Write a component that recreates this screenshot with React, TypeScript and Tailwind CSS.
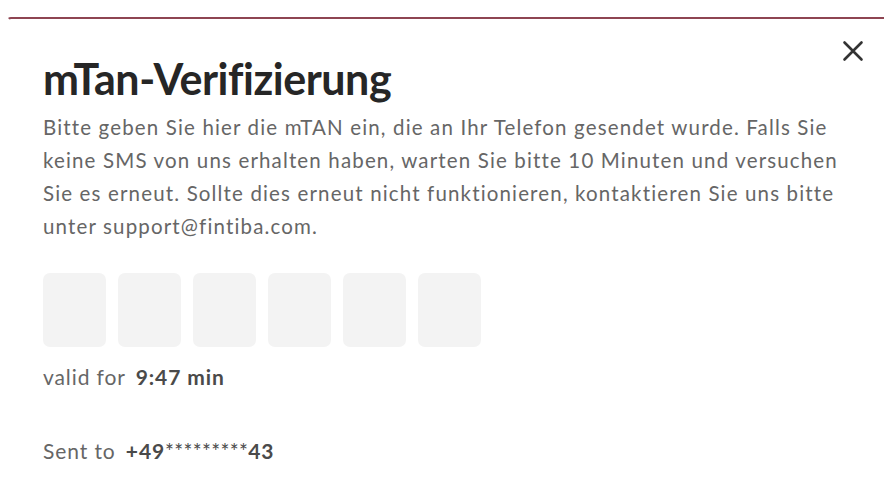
import React from "react";

const digits = [0, 1, 2, 3, 4, 5];

function CloseIcon() {
  return (
    <svg width="24" height="24" viewBox="0 0 24 24" className="text-[#333]">
      <path d="M3.5 3.5 L20.5 20.5 M20.5 3.5 L3.5 20.5" stroke="currentColor" strokeWidth="2.6" strokeLinecap="round" fill="none" />
    </svg>
  );
}

export default function App() {
  return (
    <div className="w-[889px] h-[481px] bg-white overflow-hidden" style={{ fontFamily: "Lato, 'Open Sans', sans-serif" }}>
      <div className="pt-[17px] pl-[7px] pr-[5px]">
        <div className="h-[10px] border-t-2 border-l-2 border-[#8e4552] rounded-tl-[4px] border-l-transparent" />
      </div>
      <div className="relative px-[43px] pt-[28px]">
        <button className="absolute right-[24px] top-[12px]">
          <CloseIcon />
        </button>
        <h1 className="text-[43px] leading-[48px] font-bold text-[#262626] tracking-[-0.45px]">mTan-Verifizierung</h1>
        <p className="mt-[8px] text-[20.5px] leading-[33px] tracking-[1.15px] text-[#666] w-[820px]">
          Bitte geben Sie hier die mTAN ein, die an Ihr Telefon gesendet wurde. Falls Sie keine SMS von uns erhalten haben, warten Sie bitte 10 Minuten und versuchen Sie es erneut. Sollte dies erneut nicht funktionieren, kontaktieren Sie uns bitte unter support@fintiba.com.
        </p>
        <div className="mt-[30px] flex gap-[12px]">
          {digits.map((d) => (
            <div key={d} className="w-[63px] h-[74px] shrink-0 rounded-[7px] bg-[#f3f3f3]" />
          ))}
        </div>
        <div className="mt-[16px] text-[21px] leading-[28px] tracking-[0.9px] text-[#666]">
          valid for <span className="ml-[4px] font-bold text-[#4a4a4a]">9:47 min</span>
        </div>
        <div className="mt-[46px] text-[21px] leading-[28px] tracking-[0.9px] text-[#666]">
          Sent to{" "}
          <span className="ml-[4px] font-bold text-[#4a4a4a]">
            +49<span className="font-normal tracking-[0.3px]">*********</span>43
          </span>
        </div>
      </div>
    </div>
  );
}
